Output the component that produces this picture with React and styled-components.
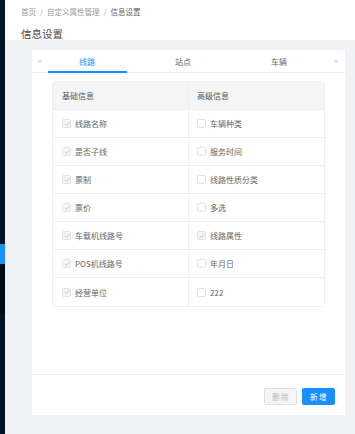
import styled, { createGlobalStyle } from "styled-components";

const GlobalStyle = createGlobalStyle`
    html, body {
        margin: 0;
        padding: 0;
        height: 100%;
    }
    body {
        font-family: "Noto Sans CJK SC", "Noto Sans", sans-serif;
        background: #f0f2f5;
    }
    #root {
        height: 100%;
    }
`;

const Layout = styled.div`
    display: flex;
    height: 434px;
    overflow: hidden;
`;

const Sidebar = styled.div`
    width: 5px;
    flex: 0 0 5px;
    display: flex;
    flex-direction: column;
    background: #001529;
`;

const SideBlock = styled.div`
    flex: 0 0 ${(p) => p.h}px;
    background: ${(p) => p.bg || "transparent"};
`;

const Main = styled.div`
    flex: 1;
    display: flex;
    flex-direction: column;
    min-width: 0;
`;

const PageHeader = styled.div`
    height: 40px;
    background: #fff;
    padding: 6px 16px 0;
    box-sizing: border-box;
`;

const Crumbs = styled.div`
    display: flex;
    align-items: center;
    font-size: 7.5px;
    line-height: 12px;
    color: #999;
`;

const Sep = styled.span`
    margin: 0 4px;
    color: #aaa;
`;

const Current = styled.span`
    color: #666;
`;

const PageTitle = styled.h1`
    margin: 9px 0 0;
    font-size: 10.5px;
    line-height: 14px;
    font-weight: 400;
    color: #4a4a4a;
`;

const Content = styled.div`
    flex: 1;
    padding: 10px 10px 0 27px;
`;

const Card = styled.div`
    height: 365px;
    background: #fff;
    display: flex;
    flex-direction: column;
`;

const TabBar = styled.div`
    position: relative;
    height: 23px;
    box-sizing: border-box;
    border-bottom: 1px solid #ebebeb;
    display: flex;
    padding-left: 7px;
`;

const Arrow = styled.span`
    position: absolute;
    top: 0;
    ${(p) => (p.side === "left" ? "left: 4px;" : "right: 5px;")}
    width: 8px;
    height: 22px;
    line-height: 22px;
    text-align: center;
    font-size: 7px;
    color: #bbb;
`;

const Tab = styled.div`
    position: relative;
    width: 96px;
    height: 22px;
    line-height: 24px;
    text-align: center;
    font-size: 8px;
    color: ${(p) => (p.active ? "#1890ff" : "#666")};

    &::after {
        content: "";
        display: ${(p) => (p.active ? "block" : "none")};
        position: absolute;
        left: 8.5px;
        right: 8.5px;
        bottom: -1px;
        height: 2px;
        background: #1890ff;
    }
`;

const Body = styled.div`
    flex: 1;
    padding: 8px 20px 0;
`;

const Table = styled.div`
    border: 1px solid #ebeef5;
    border-radius: 4px;
    overflow: hidden;
`;

const Row = styled.div`
    display: grid;
    grid-template-columns: 136px 1fr;
    height: 28px;
    box-sizing: border-box;
    border-bottom: ${(p) => (p.last ? "none" : "1px solid #ebeef5")};
    background: ${(p) => (p.head ? "#f5f5f5" : "#fff")};
`;

const Cell = styled.div`
    display: flex;
    align-items: center;
    gap: 4px;
    padding-left: ${(p) => (p.right ? 8 : 9)}px;
    font-size: 8px;
    color: ${(p) => (p.head ? "#555" : "#666")};
    border-right: ${(p) => (p.right ? "none" : "1px solid #ebeef5")};
`;

const Box = styled.span`
    width: 9px;
    height: 9px;
    box-sizing: border-box;
    border: 1px solid ${(p) => (p.checked ? "#e2e2e2" : "#dcdfe6")};
    border-radius: 1.5px;
    background: ${(p) => (p.checked ? "#f5f5f5" : "#fff")};
    display: flex;
    align-items: center;
    justify-content: center;
    flex: 0 0 9px;
`;

const Footer = styled.div`
    height: 41px;
    box-sizing: border-box;
    border-top: 1px solid #f0f0f0;
    display: flex;
    justify-content: flex-end;
    align-items: flex-start;
    gap: 5px;
    padding: 13px 10px 0 0;
`;

const Button = styled.button`
    width: 33px;
    height: 17px;
    padding: 0 0 0 1px;
    border-radius: 2px;
    font-family: inherit;
    font-size: 7.5px;
    letter-spacing: 1.5px;
    border: 1px solid ${(p) => (p.primary ? "#1890ff" : "#e0e0e0")};
    background: ${(p) => (p.primary ? "#1890ff" : "#f5f5f5")};
    color: ${(p) => (p.primary ? "#fff" : "#bbb")};
`;

const Check = ({ checked }) => (
    <Box checked={checked}>
        {checked && (
            <svg width="6" height="6" viewBox="0 0 6 6">
                <path d="M1 3.2 L2.4 4.5 L5 1.6" fill="none" stroke="#c0c4cc" strokeWidth="0.9" />
            </svg>
        )}
    </Box>
);

const rows = [
    ["线路名称", "车辆种类", false],
    ["是否子线", "服务时间", false],
    ["票制", "线路性质分类", false],
    ["票价", "多选", false],
    ["车载机线路号", "线路属性", true],
    ["POS机线路号", "年月日", false],
    ["经营单位", "222", false],
];

const App = () => {
    return (
        <Layout>
            <GlobalStyle />
            <Sidebar>
                <SideBlock h={244} />
                <SideBlock h={20} bg="#1890ff" />
                <SideBlock h={51} bg="#000c17" />
            </Sidebar>
            <Main>
                <PageHeader>
                    <Crumbs>
                        <span>首页</span>
                        <Sep>/</Sep>
                        <span>自定义属性管理</span>
                        <Sep>/</Sep>
                        <Current>信息设置</Current>
                    </Crumbs>
                    <PageTitle>信息设置</PageTitle>
                </PageHeader>
                <Content>
                    <Card>
                        <TabBar>
                            <Arrow side="left">&lt;</Arrow>
                            <Tab active>线路</Tab>
                            <Tab>站点</Tab>
                            <Tab>车辆</Tab>
                            <Arrow side="right">&gt;</Arrow>
                        </TabBar>
                        <Body>
                            <Table>
                                <Row head>
                                    <Cell head>基础信息</Cell>
                                    <Cell head right>高级信息</Cell>
                                </Row>
                                {rows.map(([a, b, bChecked], i) => (
                                    <Row key={a} last={i === rows.length - 1}>
                                        <Cell>
                                            <Check checked />
                                            {a}
                                        </Cell>
                                        <Cell right>
                                            <Check checked={bChecked} />
                                            {b}
                                        </Cell>
                                    </Row>
                                ))}
                            </Table>
                        </Body>
                        <Footer>
                            <Button>删除</Button>
                            <Button primary>新增</Button>
                        </Footer>
                    </Card>
                </Content>
            </Main>
        </Layout>
    );
};

export default App;
